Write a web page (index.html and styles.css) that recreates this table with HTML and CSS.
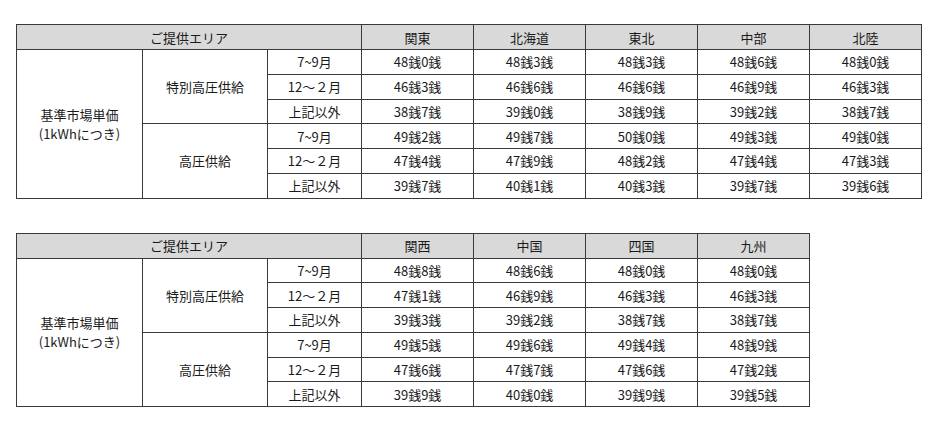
FILE: index.html
```html
<!DOCTYPE html>
<html lang="ja">
<head>
<meta charset="utf-8">
<link rel="stylesheet" href="styles.css">
</head>
<body>
<div class="page">
  <table class="price t6">
    <colgroup>
      <col class="c1"><col class="c2"><col class="c3">
      <col class="cd"><col class="cd"><col class="cd"><col class="cd"><col class="cd">
    </colgroup>
    <thead>
      <tr class="head"><th colspan="3">ご提供エリア</th><th>関東</th><th>北海道</th><th>東北</th><th>中部</th><th>北陸</th></tr>
    </thead>
    <tbody>
      <tr><td rowspan="6" class="label"><span class="ln">基準市場単価</span><span class="ln">(1kWhにつき)</span></td><td rowspan="3">特別高圧供給</td><td>7~9月</td><td>48銭0銭</td><td>48銭3銭</td><td>48銭3銭</td><td>48銭6銭</td><td>48銭0銭</td></tr>
      <tr><td>12～２月</td><td>46銭3銭</td><td>46銭6銭</td><td>46銭6銭</td><td>46銭9銭</td><td>46銭3銭</td></tr>
      <tr><td>上記以外</td><td>38銭7銭</td><td>39銭0銭</td><td>38銭9銭</td><td>39銭2銭</td><td>38銭7銭</td></tr>
      <tr><td rowspan="3">高圧供給</td><td>7~9月</td><td>49銭2銭</td><td>49銭7銭</td><td>50銭0銭</td><td>49銭3銭</td><td>49銭0銭</td></tr>
      <tr><td>12～２月</td><td>47銭4銭</td><td>47銭9銭</td><td>48銭2銭</td><td>47銭4銭</td><td>47銭3銭</td></tr>
      <tr><td>上記以外</td><td>39銭7銭</td><td>40銭1銭</td><td>40銭3銭</td><td>39銭7銭</td><td>39銭6銭</td></tr>
    </tbody>
  </table>

  <table class="price t4">
    <colgroup>
      <col class="c1"><col class="c2"><col class="c3">
      <col class="cd"><col class="cd"><col class="cd"><col class="cd">
    </colgroup>
    <thead>
      <tr class="head"><th colspan="3">ご提供エリア</th><th>関西</th><th>中国</th><th>四国</th><th>九州</th></tr>
    </thead>
    <tbody>
      <tr><td rowspan="6" class="label"><span class="ln">基準市場単価</span><span class="ln">(1kWhにつき)</span></td><td rowspan="3">特別高圧供給</td><td>7~9月</td><td>48銭8銭</td><td>48銭6銭</td><td>48銭0銭</td><td>48銭0銭</td></tr>
      <tr><td>12～２月</td><td>47銭1銭</td><td>46銭9銭</td><td>46銭3銭</td><td>46銭3銭</td></tr>
      <tr><td>上記以外</td><td>39銭3銭</td><td>39銭2銭</td><td>38銭7銭</td><td>38銭7銭</td></tr>
      <tr><td rowspan="3">高圧供給</td><td>7~9月</td><td>49銭5銭</td><td>49銭6銭</td><td>49銭4銭</td><td>48銭9銭</td></tr>
      <tr><td>12～２月</td><td>47銭6銭</td><td>47銭7銭</td><td>47銭6銭</td><td>47銭2銭</td></tr>
      <tr><td>上記以外</td><td>39銭9銭</td><td>40銭0銭</td><td>39銭9銭</td><td>39銭5銭</td></tr>
    </tbody>
  </table>
</div>
</body>
</html>
```

FILE: styles.css
```css
html, body {
  margin: 0;
  padding: 0;
  background: #ffffff;
}

.page {
  padding: 24px 0 0 16px;
  display: flex;
  flex-direction: column;
  align-items: flex-start;
  gap: 34px;
  font-family: "Noto Sans CJK JP", "Noto Sans", sans-serif;
  font-size: 13px;
  color: #1a1a1a;
}

.price {
  border-collapse: collapse;
  table-layout: fixed;
  border: 1px solid #3a3a3a;
}

.t6 { width: 905px; }
.t4 { width: 793px; }

.c1 { width: 126px; }
.c2 { width: 125px; }
.c3 { width: 94px; }
.cd { width: 112px; }

.price th,
.price td {
  border: 1px solid #3a3a3a;
  padding: 0;
  text-align: center;
  vertical-align: middle;
  line-height: 15px;
  font-weight: normal;
}

.price th {
  background: #d9d9d9;
  height: 24px;
}

.price td {
  height: 23.75px;
}

.label .ln {
  display: block;
  line-height: 19px;
}
```
